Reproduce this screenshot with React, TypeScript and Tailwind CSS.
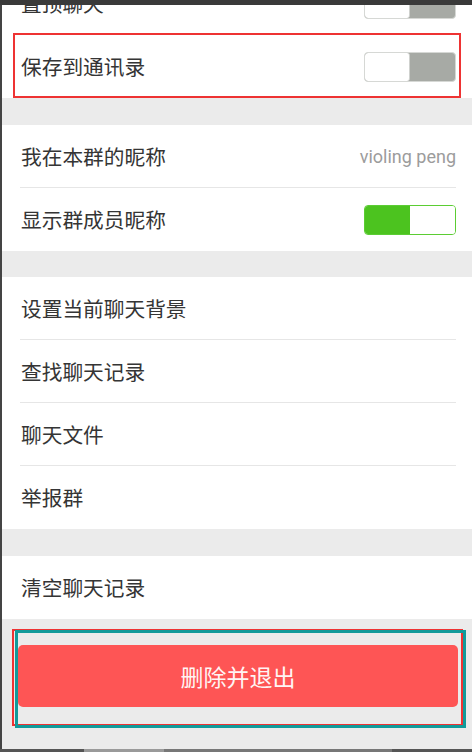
import React from "react";

const font = { fontFamily: '"Noto Sans CJK SC", "Noto Sans", sans-serif' };

function Toggle({ on }: { on: boolean }) {
  if (on) {
    return (
      <div className="flex h-[30px] w-[92px] overflow-hidden rounded-[4px] border border-[#5bcd33] bg-white">
        <div className="h-full w-[45px] bg-[#4cc31f]" />
        <div className="h-full flex-1 bg-white" />
      </div>
    );
  }
  return (
    <div className="flex h-[30px] w-[92px] overflow-hidden rounded-[4px] border border-[#d6d8d5] bg-[#a7aaa5]">
      <div className="h-full w-[45px] rounded-[3px] border-r border-[#cfd1ce] bg-white" />
      <div className="h-full flex-1" />
    </div>
  );
}

function Row({
  label,
  right,
  sep,
}: {
  label: string;
  right?: React.ReactNode;
  sep?: boolean;
}) {
  return (
    <div className="relative flex h-[63px] items-center justify-between bg-white pl-[19px] pr-[16px]">
      <span className="text-[20.7px] leading-none text-[#353535]">{label}</span>
      {right}
      {sep && (
        <div className="absolute bottom-0 left-[18px] right-[16px] h-px bg-[#e6e6e6]" />
      )}
    </div>
  );
}

export default function App() {
  return (
    <div
      className="relative flex h-[752px] w-[472px] flex-col overflow-hidden bg-[#ebebeb]"
      style={font}
    >
      <div className="h-[5px] w-full shrink-0 bg-[#3a3a3a]" />
      <div className="flex flex-1 overflow-hidden">
        <div className="w-[2px] shrink-0 bg-[#444]" />
        <div className="flex flex-1 flex-col">
          <div className="-mt-[33px]">
            <Row label="置顶聊天" right={<Toggle on={false} />} sep />
            <Row label="保存到通讯录" right={<Toggle on={false} />} />
          </div>
          <div className="mt-[27px]">
            <Row
              label="我在本群的昵称"
              right={
                <span
                  className="text-[18px] leading-none text-[#9c9c9c]"
                  style={{ fontFamily: 'Roboto, "Noto Sans", sans-serif' }}
                >
                  violing peng
                </span>
              }
              sep
            />
            <Row label="显示群成员昵称" right={<Toggle on />} />
          </div>
          <div className="mt-[26px]">
            <Row label="设置当前聊天背景" sep />
            <Row label="查找聊天记录" sep />
            <Row label="聊天文件" sep />
            <Row label="举报群" />
          </div>
          <div className="mt-[27px]">
            <Row label="清空聊天记录" />
          </div>
          <div className="ml-4 mr-[14px] mt-[26px] flex h-[62px] items-center justify-center rounded-[5px] bg-[#fe5555]">
            <span className="text-[23px] leading-none text-[#fff4f4]">删除并退出</span>
          </div>
        </div>
      </div>
      <div className="relative h-[3px] w-full shrink-0 bg-[#555]">
        <div className="absolute left-[84px] top-0 h-full w-[80px] bg-[#9a9a9a]" />
        <div className="absolute left-[164px] top-0 h-full w-[228px] bg-[#777]" />
      </div>

      {/* annotation boxes */}
      <div className="pointer-events-none absolute left-[13px] top-[33px] h-[65px] w-[448px] border-2 border-[#ee3333]" />
      <div className="pointer-events-none absolute left-[12px] top-[629px] h-[97px] w-[451px] border-2 border-[#ee3333]" />
      <div className="pointer-events-none absolute left-[15px] top-[630px] h-[98px] w-[451px] border-[3px] border-[#129a9a]" />
    </div>
  );
}
